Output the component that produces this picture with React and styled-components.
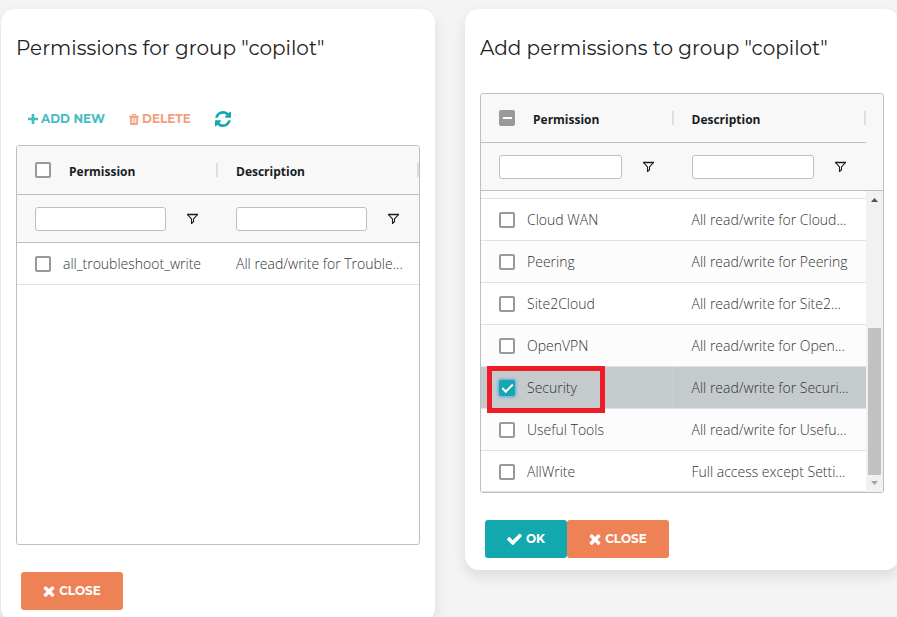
import React, { useEffect, useRef, useState } from "react";
import styled, { createGlobalStyle, css } from "styled-components";

const display = `Montserrat, Inter, "Liberation Sans", sans-serif`;
const body = `"Segoe UI", "Open Sans", "Noto Sans", sans-serif`;

const GlobalStyle = createGlobalStyle`
  *, *::before, *::after { box-sizing: border-box; }
  body { margin: 0; background: #f4f4f4; font-family: ${body}; }
`;

const Page = styled.main`
  height: 100vh;
  overflow: hidden;
  padding-top: 9px;
`;

const Columns = styled.div`
  display: grid;
  grid-template-columns: repeat(2, minmax(0, 1fr));
  align-items: start;
  gap: 30px;
  margin: 0 -2px 0 1px;
`;

const Card = styled.section`
  display: flex;
  flex-direction: column;
  padding: 24px 15px 12px;
  background: #fff;
  border-radius: 14px;
  box-shadow: 0 6px 14px rgba(0, 0, 0, 0.1);
`;

const Title = styled.h2`
  margin: 0;
  font: 400 20px/30px ${display};
  color: #222;
  white-space: nowrap;
`;

const Toolbar = styled.div`
  display: flex;
  align-items: center;
  gap: 24px;
  height: 30px;
  margin: 41px 0 -19px;
  padding-left: 12px;
`;

const ToolButton = styled.button`
  display: flex;
  align-items: center;
  gap: 3px;
  padding: 0;
  border: 0;
  background: none;
  color: ${(p) => p.$color};
  font: 700 12px/16px ${display};
  white-space: nowrap;
  cursor: pointer;
`;

const Frame = styled.div`
  display: grid;
  grid-template-columns: minmax(0, 1fr) 17px;
  grid-template-rows: 97px minmax(0, 1fr);
  height: 400px;
  margin-top: 30px;
  border: 1px solid #babfc7;
  border-radius: 3px;
  overflow: hidden;
`;

const Table = styled.table`
  grid-area: 1 / 1 / 3 / 3;
  display: flex;
  flex-direction: column;
  min-height: 0;
  font-size: 14px;
  line-height: 20px;
`;

const Head = styled.thead`
  display: block;
  height: 97px;
  padding-right: ${(p) => (p.$scrolls ? "17px" : "0")};
  background: #f8f8f8;
  border-bottom: 1px solid #babfc7;
`;

const rowGrid = css`
  display: grid;
  grid-template-columns: repeat(2, minmax(0, 1fr));
`;

const HeadRow = styled.tr`
  ${rowGrid}
  height: 49px;
  border-bottom: 1px solid #babfc7;
`;

const FilterRow = styled.tr`
  ${rowGrid}
  height: 47px;
`;

const HeadCell = styled.th`
  display: flex;
  align-items: center;
  gap: 18px;
  padding: 0 0 0 18px;
  color: #181d1f;
  font-size: 12px;
  font-weight: 700;
  text-align: left;

  &::after {
    content: "";
    width: 2px;
    height: 14px;
    margin-left: auto;
    background: #dde0e3;
  }
`;

const HeadLabel = styled.span`
  padding-top: 4px;
`;

const FilterCell = styled.td`
  display: flex;
  align-items: center;
  gap: 21px;
  padding: 0 20px 0 18px;
`;

const FilterInput = styled.input`
  flex: 1;
  min-width: 0;
  height: 24px;
  padding: 0 5px;
  border: 1px solid #babfc7;
  border-radius: 3px;
  background: #fff;
  font: 13px/20px ${body};
`;

const FilterButton = styled.button`
  display: flex;
  padding: 0;
  border: 0;
  background: none;
  color: #181d1f;
`;

const Rows = styled.tbody`
  display: block;
  flex: 1;
  min-height: 0;
  padding-right: ${(p) => (p.$scrolls ? "17px" : "0")};
  overflow: hidden;
`;

const Row = styled.tr`
  ${rowGrid}
  position: relative;
  height: ${(p) => (p.$last ? "41px" : "42px")};
  background: ${(p) => (p.$selected ? "#c5cacd" : p.$shaded ? "#fcfcfc" : "#fff")};
  border-bottom: 1px solid #dde2eb;
`;

const RowSliver = styled.tr`
  display: block;
  height: 8px;
  background: #fcfcfc;
  border-bottom: 1px solid #dde2eb;
`;

const Cell = styled.td`
  min-width: 0;
  padding: 0 12px 0 18px;
  color: #303436;
  font-weight: 300;
  line-height: 42px;
  overflow: hidden;
  text-overflow: ellipsis;
  white-space: nowrap;
  border-right: ${(p) => (p.$edge ? "1px solid #d0d4d7" : "0")};
`;

const CheckLabel = styled.label`
  display: flex;
  align-items: center;
  gap: 12px;
`;

const CheckInput = styled.input.attrs({ type: "checkbox" })`
  appearance: none;
  display: grid;
  place-items: center;
  flex: none;
  width: 16px;
  height: 16px;
  margin: 0;
  border: 2px solid #999;
  border-radius: 2px;
  background: #fff;

  &:checked {
    border-color: #13a8ad;
    background: #13a8ad;
    box-shadow: 0 0 3px 1px #5ea6ee;
  }
  &:checked::after {
    content: "";
    width: 11px;
    height: 6px;
    border: solid #fff;
    border-width: 0 0 2px 2px;
    transform: translateY(-1px) rotate(-45deg);
  }
  &:indeterminate {
    background: #999;
  }
  &:indeterminate::after {
    content: "";
    width: 9px;
    height: 2px;
    background: #fff;
  }
`;

const Highlight = styled.div`
  position: absolute;
  z-index: 1;
  top: -1px;
  left: 6px;
  width: 118px;
  height: 47px;
  border: 5px solid #ee1c25;
  pointer-events: none;
`;

const ScrollTrack = styled.div`
  grid-area: 2 / 2;
  display: flex;
  flex-direction: column;
  align-items: center;
  background: #f1f1f1;
`;

const ScrollArrow = styled.svg`
  flex: none;
  width: 17px;
  height: 17px;
  fill: ${(p) => p.$tone};
`;

const ScrollThumb = styled.div`
  width: 13px;
  height: 49%;
  margin-top: auto;
  background: #c1c1c1;
`;

const Actions = styled.div`
  display: flex;
  margin: 27px 0 0 5px;
`;

const ActionButton = styled.button`
  display: flex;
  align-items: center;
  justify-content: center;
  gap: 4px;
  width: ${(p) => (p.$wide ? "102px" : "82px")};
  height: 38px;
  padding: 0;
  border: 0;
  border-radius: 3px;
  background: ${(p) => p.$color};
  color: #fff;
  font: 700 12px/16px ${display};
  cursor: pointer;
`;

const glyphs = {
  times:
    "M1490 1322q0 40-28 68l-136 136q-28 28-68 28t-68-28l-294-294-294 294q-28 28-68 28t-68-28l-136-136q-28-28-28-68t28-68l294-294-294-294q-28-28-28-68t28-68l136-136q28-28 68-28t68 28l294 294 294-294q28-28 68-28t68 28l136 136q28 28 28 68t-28 68l-294 294 294 294q28 28 28 68z",
  check:
    "M1671 566q0 40-28 68l-724 724-136 136q-28 28-68 28t-68-28l-136-136-362-362q-28-28-28-68t28-68l136-136q28-28 68-28t68 28l294 295 656-657q28-28 68-28t68 28l136 136q28 28 28 68z",
  plus:
    "M1600 736v192q0 40-28 68t-68 28h-416v416q0 40-28 68t-68 28h-192q-40 0-68-28t-28-68v-416h-416q-40 0-68-28t-28-68v-192q0-40 28-68t68-28h416v-416q0-40 28-68t68-28h192q40 0 68 28t28 68v416h416q40 0 68 28t28 68z",
  trash:
    "M704 1376v-704q0-14-9-23t-23-9h-64q-14 0-23 9t-9 23v704q0 14 9 23t23 9h64q14 0 23-9t9-23zm256 0v-704q0-14-9-23t-23-9h-64q-14 0-23 9t-9 23v704q0 14 9 23t23 9h64q14 0 23-9t9-23zm256 0v-704q0-14-9-23t-23-9h-64q-14 0-23 9t-9 23v704q0 14 9 23t23 9h64q14 0 23-9t9-23zm-544-992h448l-48-117q-7-9-17-11h-317q-10 2-17 11zm928 32v64q0 14-9 23t-23 9h-96v948q0 83-47 143.5t-113 60.5h-832q-66 0-113-58.5t-47-141.5v-952h-96q-14 0-23-9t-9-23v-64q0-14 9-23t23-9h309l70-167q15-37 54-63t79-26h320q40 0 79 26t54 63l70 167h309q14 0 23 9t9 23z",
  refresh:
    "M1639 1056q0 5-1 7-64 268-268 434.5t-478 166.5q-146 0-282.5-55t-243.5-157l-129 129q-19 19-45 19t-45-19-19-45v-448q0-26 19-45t45-19h448q26 0 45 19t19 45-19 45l-137 137q71 66 161 102t187 36q134 0 250-65t186-179q11-17 53-117 8-23 30-23h192q13 0 22.5 9.5t9.5 22.5zm25-800v448q0 26-19 45t-45 19h-448q-26 0-45-19t-19-45 19-45l138-138q-148-137-349-137-134 0-250 65t-186 179q-11 17-53 117-8 23-30 23h-199q-13 0-22.5-9.5t-9.5-22.5v-7q65-268 270-434.5t480-166.5q146 0 284 55.5t245 156.5l130-129q19-19 45-19t45 19 19 45z",
};

const boxes = {
  times: "302 238 1188 1316",
  check: "121 270 1550 1252",
  plus: "192 128 1408 1408",
  trash: "192 128 1408 1536",
  refresh: "128 128 1536 1536",
};

function Glyph({ name, width, height = width }) {
  return (
    <svg width={width} height={height} viewBox={boxes[name]} fill="currentColor" aria-hidden="true">
      <path d={glyphs[name]} />
    </svg>
  );
}

function FunnelIcon() {
  return (
    <svg width="11" height="11" viewBox="0 0 11 11" fill="none" stroke="currentColor" aria-hidden="true">
      <path d="M0 1.500h11" strokeWidth="1.300" />
      <path d="M.8 1.800 4.500 6V10.500l2-1.800V6l3.700-4.200" strokeWidth="1.100" />
    </svg>
  );
}

function Check({ mixed = false, initial = false, ...rest }) {
  const ref = useRef(null);
  const [checked, setChecked] = useState(initial);
  useEffect(() => {
    ref.current.indeterminate = mixed;
  }, [mixed]);
  return <CheckInput ref={ref} checked={checked} onChange={(e) => setChecked(e.target.checked)} {...rest} />;
}

function PermissionTable({ label, rows, scrolls = false, mixed = false }) {
  return (
    <Frame>
      <Table aria-label={label}>
        <Head $scrolls={scrolls}>
          <HeadRow>
            <HeadCell scope="col">
              <Check mixed={mixed} aria-label="Select all permissions" />
              <HeadLabel>Permission</HeadLabel>
            </HeadCell>
            <HeadCell scope="col">
              <HeadLabel>Description</HeadLabel>
            </HeadCell>
          </HeadRow>
          <FilterRow>
            {["Permission", "Description"].map((name) => (
              <FilterCell key={name}>
                <FilterInput type="text" aria-label={`${name} filter`} />
                <FilterButton type="button" aria-label={`${name} filter menu`}>
                  <FunnelIcon />
                </FilterButton>
              </FilterCell>
            ))}
          </FilterRow>
        </Head>
        <Rows $scrolls={scrolls}>
          {scrolls && <RowSliver aria-hidden="true" />}
          {rows.map((row, i) => (
            <Row
              key={row.name}
              $selected={row.selected}
              $shaded={i % 2 === 1}
              $last={scrolls && i === rows.length - 1}
            >
              <Cell $edge={row.selected}>
                <CheckLabel>
                  <Check initial={row.selected} />
                  {row.name}
                </CheckLabel>
                {row.selected && <Highlight />}
              </Cell>
              <Cell>{row.description}</Cell>
            </Row>
          ))}
        </Rows>
      </Table>
      {scrolls && (
        <ScrollTrack aria-hidden="true">
          <ScrollArrow viewBox="0 0 17 17" $tone="#505050">
            <path d="M5 11h7L8.500 7z" />
          </ScrollArrow>
          <ScrollThumb />
          <ScrollArrow viewBox="0 0 17 17" $tone="#a3a3a3">
            <path d="M5 6h7L8.500 10z" />
          </ScrollArrow>
        </ScrollTrack>
      )}
    </Frame>
  );
}

const groupRows = [
  { name: "all_troubleshoot_write", description: "All read/write for Trouble..." },
];

const availableRows = [
  { name: "Cloud WAN", description: "All read/write for Cloud..." },
  { name: "Peering", description: "All read/write for Peering" },
  { name: "Site2Cloud", description: "All read/write for Site2..." },
  { name: "OpenVPN", description: "All read/write for Open..." },
  { name: "Security", description: "All read/write for Securi...", selected: true },
  { name: "Useful Tools", description: "All read/write for Usefu..." },
  { name: "AllWrite", description: "Full access except Setti..." },
];

export default function App() {
  return (
    <Page>
      <GlobalStyle />
      <Columns>
        <Card>
          <Title>Permissions for group "copilot"</Title>
          <Toolbar>
            <ToolButton type="button" $color="#45bcbf">
              <Glyph name="plus" width={10} /> ADD NEW
            </ToolButton>
            <ToolButton type="button" $color="#f39e7c">
              <Glyph name="trash" width={10} height={11} /> DELETE
            </ToolButton>
            <ToolButton type="button" $color="#13a8ad" aria-label="Refresh">
              <Glyph name="refresh" width={16} />
            </ToolButton>
          </Toolbar>
          <PermissionTable label="Group permissions" rows={groupRows} />
          <Actions>
            <ActionButton type="button" $color="#ef8157" $wide>
              <Glyph name="times" width={12} /> CLOSE
            </ActionButton>
          </Actions>
        </Card>
        <Card>
          <Title>Add permissions to group "copilot"</Title>
          <PermissionTable label="Available permissions" rows={availableRows} scrolls mixed />
          <Actions>
            <ActionButton type="button" $color="#13a8ad">
              <Glyph name="check" width={15} height={12} /> OK
            </ActionButton>
            <ActionButton type="button" $color="#ef8157" $wide>
              <Glyph name="times" width={12} /> CLOSE
            </ActionButton>
          </Actions>
        </Card>
      </Columns>
    </Page>
  );
}
